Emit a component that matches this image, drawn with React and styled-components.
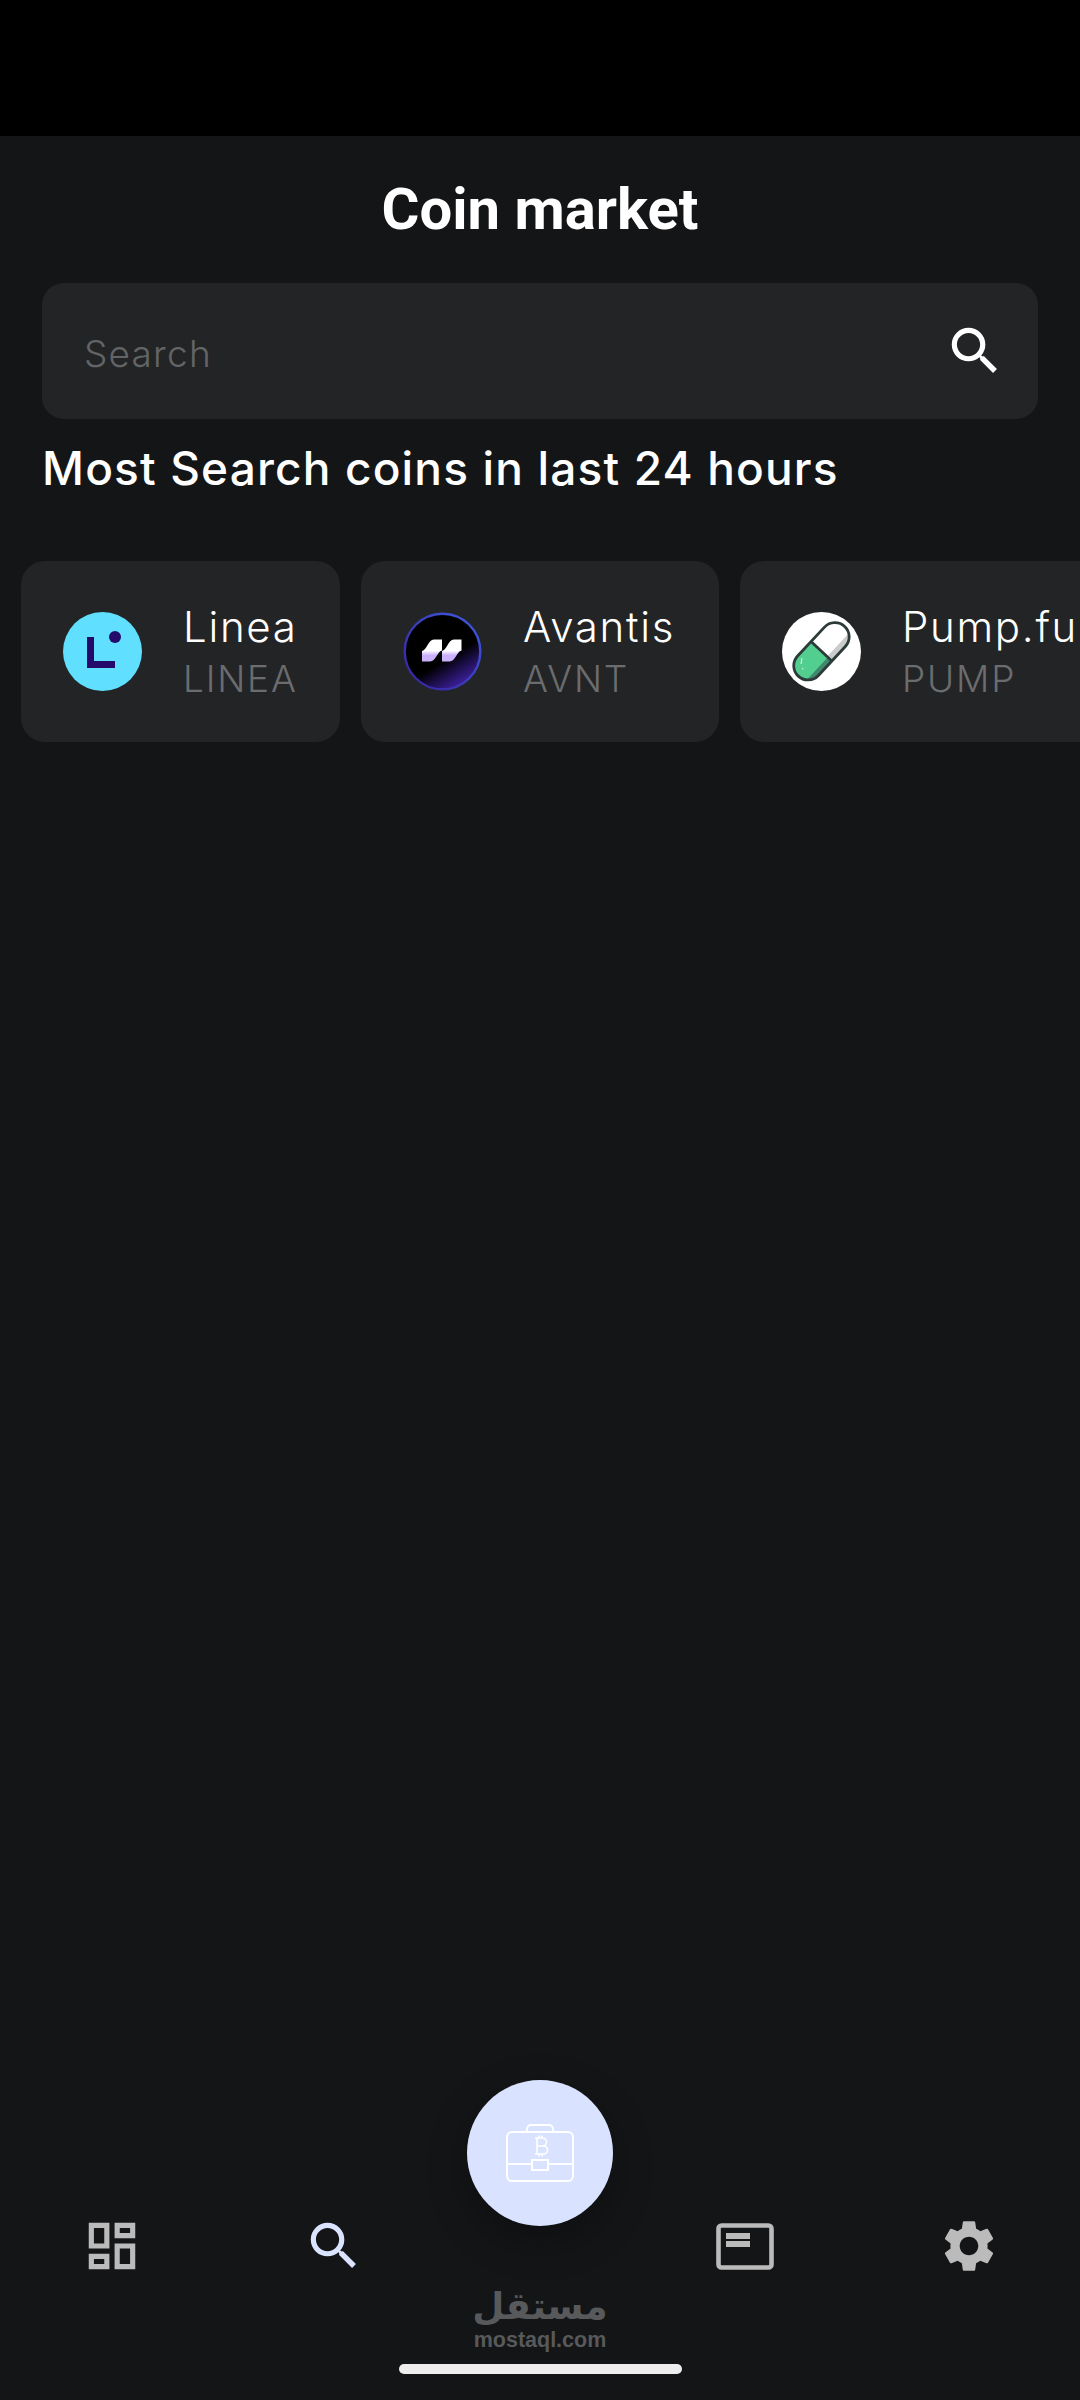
import React from 'react';
import styled, { createGlobalStyle } from 'styled-components';

const coins = [
    { name: 'Linea', ticker: 'LINEA', width: 319, logo: 'linea' },
    { name: 'Avantis', ticker: 'AVNT', width: 358, logo: 'avantis' },
    { name: 'Pump.fun', ticker: 'PUMP', width: 400, logo: 'pump' },
];

const SEARCH_PATH = 'M15.5 14h-.79l-.28-.27A6.471 6.471 0 0 0 16 9.5 6.5 6.5 0 1 0 9.5 16c1.61 0 3.09-.59 4.23-1.57l.27.28v.79l5 4.99L20.49 19l-4.99-5zm-6 0C7.01 14 5 11.99 5 9.5S7.01 5 9.5 5 14 7.01 14 9.5 11.99 14 9.5 14z';
const DASHBOARD_PATH = 'M19 5v2h-4V5h4M9 5v6H5V5h4m10 8v6h-4v-6h4M9 17v2H5v-2h4M21 3h-8v6h8V3zM11 3H3v10h8V3zm10 8h-8v10h8V11zm-10 4H3v6h8v-6z';
const GEAR_PATH = 'M19.14 12.94c.04-.3.06-.61.06-.94 0-.32-.02-.64-.07-.94l2.03-1.58a.49.49 0 0 0 .12-.61l-1.92-3.32a.488.488 0 0 0-.59-.22l-2.39.96c-.5-.38-1.03-.7-1.62-.94l-.36-2.54a.484.484 0 0 0-.48-.41h-3.84c-.24 0-.43.17-.47.41l-.36 2.54c-.59.24-1.13.57-1.62.94l-2.39-.96c-.22-.08-.47 0-.59.22L2.74 8.87c-.12.21-.08.47.12.61l2.03 1.58c-.05.3-.09.63-.09.94s.02.64.07.94l-2.03 1.58a.49.49 0 0 0-.12.61l1.92 3.32c.12.22.37.29.59.22l2.39-.96c.5.38 1.03.7 1.62.94l.36 2.54c.05.24.24.41.48.41h3.84c.24 0 .44-.17.47-.41l.36-2.54c.59-.24 1.13-.56 1.62-.94l2.39.96c.22.08.47 0 .59-.22l1.92-3.32c.12-.22.07-.47-.12-.61l-2.01-1.58zM12 15.6c-1.98 0-3.6-1.62-3.6-3.6s1.62-3.6 3.6-3.6 3.6 1.62 3.6 3.6-1.62 3.6-3.6 3.6z';

const MaterialIcon = ({ path, color }) => (
    <svg width="62" height="62" viewBox="0 0 24 24" fill={color}><path d={path} /></svg>
);

const LineaLogo = () => (
    <svg width="79" height="79" viewBox="0 0 79 79">
        <circle cx="39.5" cy="39.5" r="39.5" fill="#61dfff" />
        <path d="M24 25h7v24h21v7H24z" fill="#240a6b" />
        <circle cx="52" cy="25" r="6" fill="#240a6b" />
    </svg>
);

const AvantisLogo = () => (
    <svg width="79" height="79" viewBox="0 0 79 79">
        <defs>
            <linearGradient id="avRing" x1="0" y1="1" x2="1" y2="0">
                <stop offset="0" stopColor="#38209a" />
                <stop offset="1" stopColor="#3f5be0" />
            </linearGradient>
            <linearGradient id="avFill" x1="0.35" y1="0.35" x2="0.72" y2="0.95">
                <stop offset="0.45" stopColor="#000" />
                <stop offset="1" stopColor="#3c1f9c" />
            </linearGradient>
            <linearGradient id="avMark" x1="0" y1="0" x2="0" y2="1">
                <stop offset="0.5" stopColor="#fff" />
                <stop offset="0.72" stopColor="#cbb0fb" />
            </linearGradient>
        </defs>
        <circle cx="39.5" cy="39.5" r="37.8" fill="url(#avFill)" stroke="url(#avRing)" strokeWidth="2.4" />
        <path d="M19 39c5-1 6-11 12-11.500h8v11c-5 1-6 11-12 11h-8z" fill="url(#avMark)" />
        <path d="M39 39c5-1 6-11 12-11.500h7.500v11c-5 1-6 11-12 11H39z" fill="url(#avMark)" />
    </svg>
);

const PumpLogo = () => (
    <svg width="79" height="79" viewBox="0 0 79 79">
        <defs>
            <clipPath id="pillClip">
                <rect x="5.500" y="25" width="68" height="28.500" rx="14.250" />
            </clipPath>
        </defs>
        <circle cx="39.5" cy="39.5" r="39.5" fill="#fff" />
        <g transform="rotate(-47 39.5 39.3)">
            <g clipPath="url(#pillClip)">
                <rect x="39.500" y="25" width="34" height="28.500" fill="#fff" />
                <rect x="41" y="47" width="33" height="7" fill="#c9cccb" />
                <rect x="5" y="25" width="34.500" height="28.500" fill="#52cf8f" />
                <rect x="5" y="48" width="34.500" height="6" fill="#3f8a6c" />
            </g>
            <rect x="5.500" y="25" width="68" height="28.500" rx="14.250" fill="none" stroke="#2d3a3a" strokeWidth="2.800" />
            <path d="M39.500 25v28.500" stroke="#2d3a3a" strokeWidth="2.800" />
        </g>
        <path d="M20 46l-1 6M20.500 56l.5 1.500" stroke="#e8f5ee" strokeWidth="1" fill="none" />
    </svg>
);

const logos = { linea: LineaLogo, avantis: AvantisLogo, pump: PumpLogo };

// briefcase on the round button, white outline on light blue
const BriefcaseIcon = () => (
    <svg width="68" height="60" viewBox="0 0 68 60" fill="none" stroke="#fff" strokeWidth="2">
        <rect x="1" y="9" width="66" height="49" rx="5" />
        <path d="M21 9V6a4 4 0 0 1 4-4h18a4 4 0 0 1 4 4v3" />
        <path d="M1 41h25M42 41h25" />
        <rect x="26" y="37" width="16" height="10" />
        <path d="M31 15v16M31 15h5.500a3.600 3.600 0 0 1 0 8H31m0 0h6.500a4 4 0 0 1 0 8H31M29 15h3M29 31h3M33 12.500v2.500M36 12.500v2.500M33 31v2.500M36 31v2.500" strokeWidth="1.600" />
    </svg>
);

const NewsIcon = () => (
    <svg width="58" height="47" viewBox="0 0 58 47" fill="none">
        <rect x="2.500" y="2.500" width="53" height="42" rx="3" stroke="#bbbbbb" strokeWidth="4.600" />
        <path d="M10 10h24v6H10zM10 18h24v6H10z" fill="#bbbbbb" />
    </svg>
);

const App = () => {
    return (
        <>
            <GlobalStyle />
            <Page>
                <StatusBar />
                <Title>Coin market</Title>
                <SearchBox>
                    <SearchInput placeholder="Search" readOnly />
                    <MaterialIcon path={SEARCH_PATH} color="#ffffff" />
                </SearchBox>
                <SectionTitle>Most Search coins in last 24 hours</SectionTitle>
                <CoinRow>
                    {coins.map((coin) => {
                        const Logo = logos[coin.logo];
                        return (
                            <CoinCard key={coin.ticker} $width={coin.width}>
                                <LogoSlot><Logo /></LogoSlot>
                                <CoinText>
                                    <CoinName>{coin.name}</CoinName>
                                    <CoinTicker>{coin.ticker}</CoinTicker>
                                </CoinText>
                            </CoinCard>
                        );
                    })}
                </CoinRow>
                <BottomArea>
                    <NavRow>
                        <NavItem><MaterialIcon path={DASHBOARD_PATH} color="#bbbbbb" /></NavItem>
                        <NavItem><MaterialIcon path={SEARCH_PATH} color="#dbe4ff" /></NavItem>
                        <RoundButton><BriefcaseIcon /></RoundButton>
                        <NavItem><NewsIcon /></NavItem>
                        <NavItem><MaterialIcon path={GEAR_PATH} color="#bbbbbb" /></NavItem>
                    </NavRow>
                    <Watermark>
                        <WatermarkArabic>مستقل</WatermarkArabic>
                        <WatermarkLatin>mostaql.com</WatermarkLatin>
                    </Watermark>
                    <HomeIndicator />
                </BottomArea>
            </Page>
        </>
    );
};

export default App;

const GlobalStyle = createGlobalStyle`
    html, body {
        margin: 0;
        padding: 0;
        background: #141517;
    }
    * {
        box-sizing: border-box;
    }
`;

const Page = styled.div`
    width: 1080px;
    height: 2400px;
    display: flex;
    flex-direction: column;
    background: #141517;
    overflow: hidden;
    font-family: Inter, "Liberation Sans", sans-serif;
`;

const StatusBar = styled.div`
    height: 136px;
    flex-shrink: 0;
    background: #000;
`;

const Title = styled.h1`
    height: 147px;
    margin: 0;
    padding-bottom: 2px;
    display: flex;
    align-items: center;
    justify-content: center;
    font-family: Roboto, sans-serif;
    font-size: 58px;
    font-weight: 700;
    color: #fff;
`;

const SearchBox = styled.div`
    height: 136px;
    margin: 0 42px;
    padding: 0 32px 0 42px;
    display: flex;
    align-items: center;
    justify-content: space-between;
    background: #232426;
    border-radius: 22px;
`;

const SearchInput = styled.input`
    flex: 1;
    height: 50px;
    margin-top: 4px;
    padding: 0;
    border: none;
    outline: none;
    background: transparent;
    font-family: inherit;
    font-size: 37px;
    font-weight: 300;
    letter-spacing: 1.2px;
    color: #fff;
    &::placeholder {
        color: #636466;
        opacity: 1;
    }
`;

const SectionTitle = styled.h2`
    margin: 19px 42px 0;
    height: 60px;
    line-height: 60px;
    font-size: 46px;
    font-weight: 450;
    letter-spacing: 1.15px;
    color: #fff;
    white-space: nowrap;
`;

const CoinRow = styled.div`
    margin-top: 63px;
    padding-left: 21px;
    display: flex;
    gap: 21px;
`;

const CoinCard = styled.div`
    width: ${(props) => props.$width}px;
    height: 181px;
    flex-shrink: 0;
    padding: 0 42px;
    display: flex;
    align-items: center;
    gap: 41px;
    background: #232426;
    border-radius: 24px;
`;

const LogoSlot = styled.div`
    width: 79px;
    height: 79px;
    flex-shrink: 0;
    svg {
        display: block;
    }
`;

const CoinText = styled.div`
    display: flex;
    flex-direction: column;
    gap: 2px;
    padding-top: 2px;
    white-space: nowrap;
`;

const CoinName = styled.span`
    font-size: 42px;
    line-height: 50px;
    font-weight: 300;
    letter-spacing: 1.7px;
    color: #fff;
`;

const CoinTicker = styled.span`
    font-size: 37px;
    line-height: 50px;
    font-weight: 300;
    letter-spacing: 1.8px;
    color: #6b6c6e;
`;

const BottomArea = styled.div`
    margin-top: auto;
    display: flex;
    flex-direction: column;
    align-items: center;
`;

const NavRow = styled.div`
    width: 100%;
    height: 200px;
    display: grid;
    grid-template-columns: 224px 220px 192px 218px 226px;
    align-items: start;
    justify-items: center;
`;

const NavItem = styled.div`
    margin-top: 135px;
    height: 62px;
    display: flex;
    align-items: center;
    justify-content: center;
    &:last-child {
        justify-self: end;
        margin-right: 80px;
    }
`;

const RoundButton = styled.div`
    width: 146px;
    height: 146px;
    border-radius: 50%;
    display: flex;
    align-items: center;
    justify-content: center;
    background: #d9e3ff;
    box-shadow: 0 14px 40px rgba(0, 0, 0, 0.3);
`;

const Watermark = styled.div`
    height: 84px;
    padding-top: 4px;
    display: flex;
    flex-direction: column;
    align-items: center;
    color: #57595b;
`;

const WatermarkArabic = styled.span`
    font-family: "DejaVu Sans", sans-serif;
    font-size: 37px;
    line-height: 46px;
    font-weight: 700;
`;

const WatermarkLatin = styled.span`
    font-family: "Liberation Sans", sans-serif;
    font-size: 21.5px;
    line-height: 20px;
    font-weight: 700;
`;

const HomeIndicator = styled.div`
    width: 283px;
    height: 10px;
    margin-bottom: 26px;
    border-radius: 5px;
    background: #eeeeee;
`;
